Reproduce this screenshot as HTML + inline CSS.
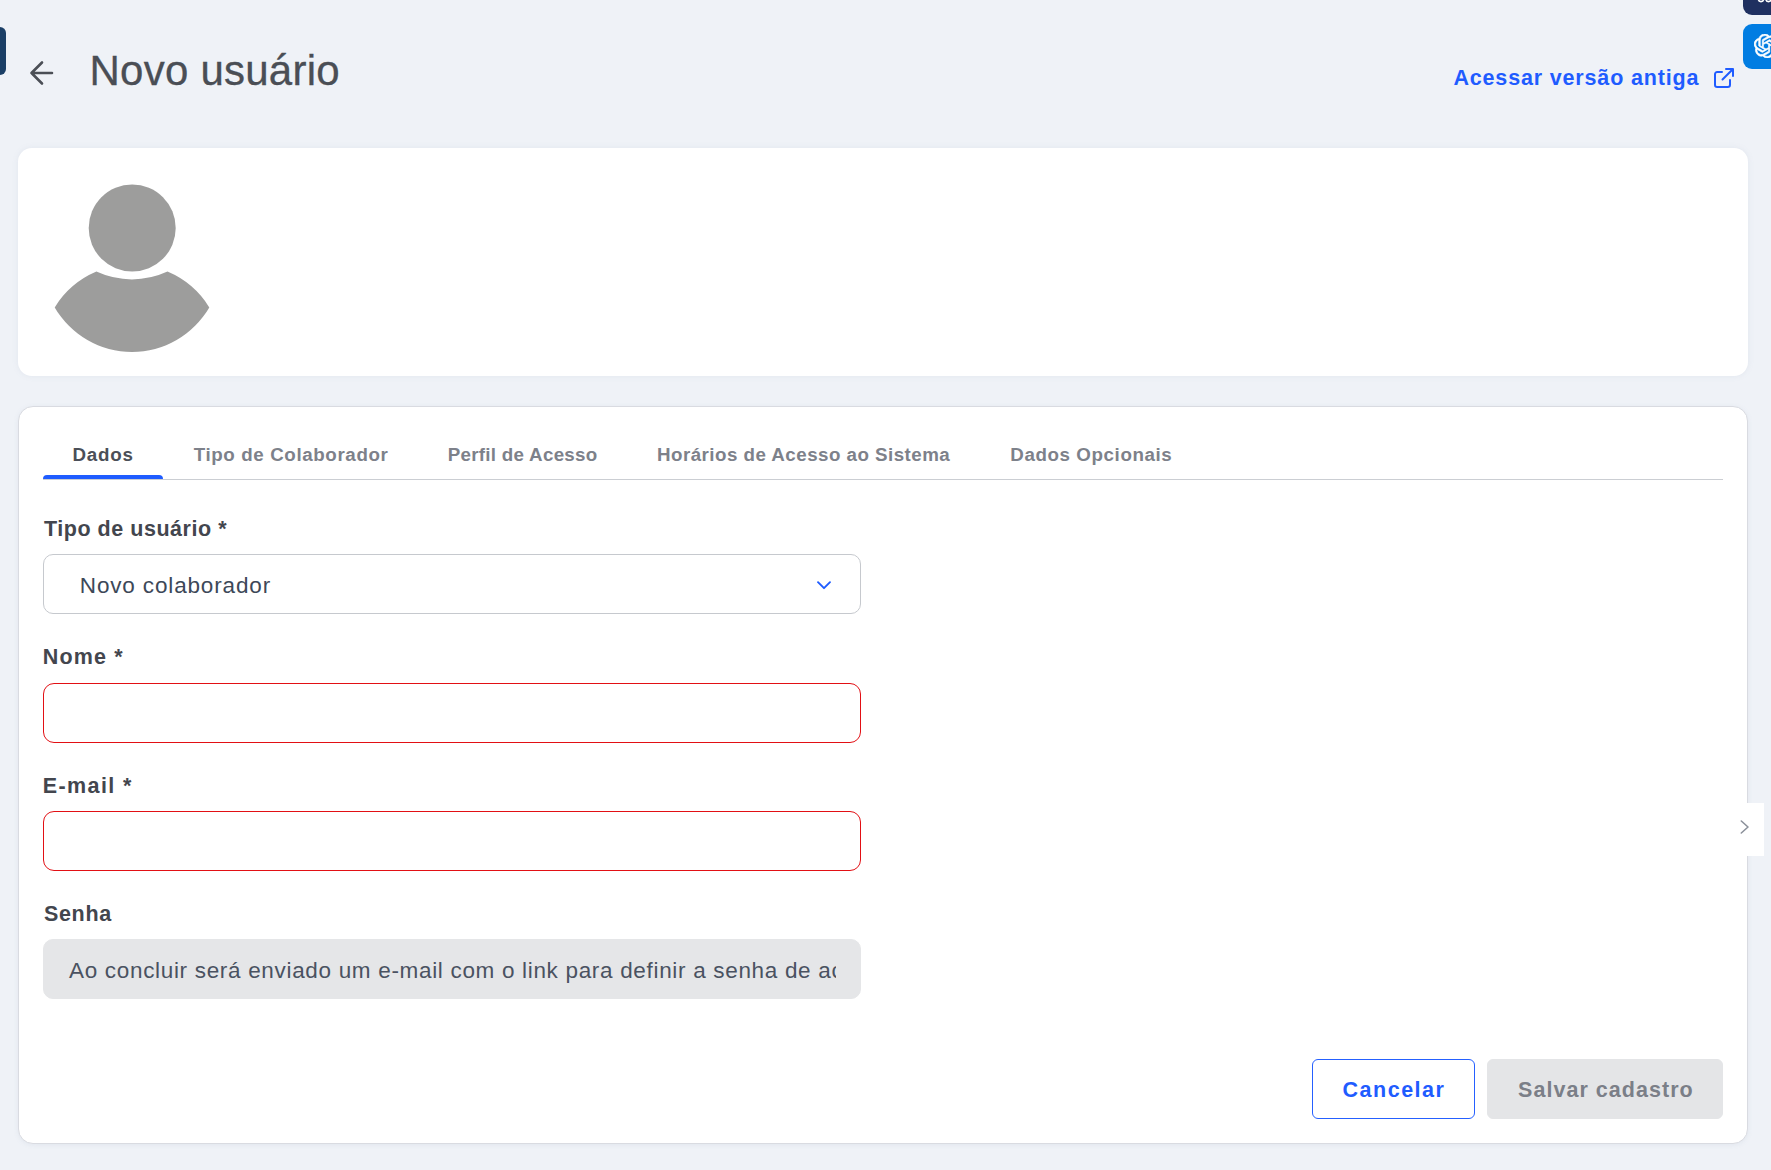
<!DOCTYPE html>
<html lang="pt-BR">
<head>
<meta charset="utf-8">
<title>Novo usuário</title>
<style>
  html, body { margin: 0; padding: 0; }
  body {
    width: 1771px; height: 1170px; overflow: hidden; position: relative;
    background: #eff2f7;
    font-family: "Liberation Sans", sans-serif;
    color: #43474f;
  }
  .abs { position: absolute; }
  .t { position: absolute; white-space: nowrap; line-height: 1; }
  .b { font-weight: 700; }

  .leftbar { left: 0; top: 27px; width: 6px; height: 48px; background: #1b3f66; border-radius: 0 6px 6px 0; }
  .navy { left: 1743px; top: -10px; width: 40px; height: 25px; background: #1f3060; border-radius: 9px; }
  .chat { left: 1743px; top: 24px; width: 40px; height: 45px; background: #017de2; border-radius: 9px; }

  .card1 { left: 18px; top: 148px; width: 1730px; height: 228px; background: #fff; border-radius: 14px;
           box-shadow: 0 0 6px rgba(120,135,170,.10); }
  .card2 { left: 18px; top: 406px; width: 1728px; height: 736px; background: #fff; border-radius: 15px;
           border: 1px solid #d9dbe1; box-shadow: 0 1px 5px rgba(120,135,170,.10); }

  .tabline { left: 43px; top: 479px; width: 1680px; height: 1px; background: #cbced3; }
  .tabactive { left: 43px; top: 475px; width: 120px; height: 4px; background: #1f5cff; border-radius: 4px 4px 0 0; }
  .tab { font-size: 18.75px; font-weight: 700; color: #7d818a; }
  .tab.on { color: #4b4f58; }

  .lbl { font-size: 21.5px; font-weight: 700; color: #43464e; }
  .field { left: 43px; width: 816px; height: 58px; border-radius: 10px; background: #fff; }
  .sel { border: 1px solid #c6c9ce; }
  .err { border: 1px solid #e20f14; border-radius: 11px; }
  .dis { background: #e5e6e8; border: 1px solid #e5e6e8; overflow: hidden; }
  .val { font-size: 22.5px; color: #3d4858; }

  .btn { top: 1059px; height: 58px; border-radius: 6px; font-size: 21.5px; font-weight: 700; }
  .cancel { left: 1312px; width: 161px; border: 1px solid #2560ff; background: #fff; color: #1f5cff; }
  .save { left: 1487px; width: 234px; border: 1px solid #e4e5e7; background: #e4e5e7; color: #7b7f88; }

  .sidetab { left: 1730px; top: 803px; width: 34px; height: 53px; background: #fff; }
</style>
</head>
<body>

<div class="abs leftbar"></div>
<div class="abs navy"></div>
<div class="abs chat"></div>
<svg class="abs" style="left:1754px;top:34px" width="24" height="24" viewBox="0 0 24 24" fill="#fff" stroke="#fff" stroke-width="0.7" stroke-linejoin="round">
  <path d="M22.2819 9.8211a5.9847 5.9847 0 0 0-.5157-4.9108 6.0462 6.0462 0 0 0-6.5098-2.9A6.0651 6.0651 0 0 0 4.9807 4.1818a5.9847 5.9847 0 0 0-3.9977 2.9 6.0462 6.0462 0 0 0 .7427 7.0966 5.98 5.98 0 0 0 .511 4.9107 6.051 6.051 0 0 0 6.5146 2.9001A5.9847 5.9847 0 0 0 13.2599 24a6.0557 6.0557 0 0 0 5.7718-4.2058 5.9894 5.9894 0 0 0 3.9977-2.9001 6.0557 6.0557 0 0 0-.7475-7.0729zm-9.022 12.6081a4.4755 4.4755 0 0 1-2.8764-1.0408l.1419-.0804 4.7783-2.7582a.7948.7948 0 0 0 .3927-.6813v-6.7369l2.02 1.1686a.071.071 0 0 1 .038.052v5.5826a4.504 4.504 0 0 1-4.4945 4.4944zm-9.6607-4.1254a4.4708 4.4708 0 0 1-.5346-3.0137l.142.0852 4.783 2.7582a.7712.7712 0 0 0 .7806 0l5.8428-3.3685v2.3324a.0804.0804 0 0 1-.0332.0615L9.74 19.9502a4.4992 4.4992 0 0 1-6.1408-1.6464zM2.3408 7.8956a4.485 4.485 0 0 1 2.3655-1.9728V11.6a.7664.7664 0 0 0 .3879.6765l5.8144 3.3543-2.0201 1.1685a.0757.0757 0 0 1-.071 0l-4.8303-2.7865A4.504 4.504 0 0 1 2.3408 7.872zm16.5963 3.8558L13.1038 8.364 15.1192 7.2a.0757.0757 0 0 1 .071 0l4.8303 2.7913a4.4944 4.4944 0 0 1-.6765 8.1042v-5.6772a.79.79 0 0 0-.407-.667zm2.0107-3.0231l-.142-.0852-4.7735-2.7818a.7759.7759 0 0 0-.7854 0L9.409 9.2297V6.8974a.0662.0662 0 0 1 .0284-.0615l4.8303-2.7866a4.4992 4.4992 0 0 1 6.6802 4.66zM8.3065 12.863l-2.02-1.1638a.0804.0804 0 0 1-.038-.0567V6.0742a4.4992 4.4992 0 0 1 7.3757-3.4537l-.142.0805L8.704 5.459a.7948.7948 0 0 0-.3927.6813zm1.0976-2.3654l2.602-1.4998 2.6069 1.4998v2.9994l-2.5974 1.4997-2.6067-1.4997Z"/>
</svg>
<svg class="abs" style="left:1756px;top:0" width="15" height="5" viewBox="0 0 15 5" fill="none" stroke="#fff" stroke-width="1.6">
  <circle cx="5" cy="-1" r="2.6"/><circle cx="12.5" cy="-1" r="2.6"/>
</svg>

<!-- header -->
<svg class="abs" style="left:26.5px;top:59px" width="28" height="28" viewBox="0 0 28 28" fill="none" stroke="#4b4f56" stroke-width="2.6" stroke-linecap="round" stroke-linejoin="round">
  <path d="M25 14H4.5M15 3.5L4.5 14L15 24.5"/>
</svg>
<div class="t" id="title" style="-webkit-text-stroke:0.3px #4a4e55;left:89.5px;top:50px;letter-spacing:0.24px;font-size:42px;color:#4a4e55;">Novo usuário</div>

<div class="t b" id="oldlink" style="left:1453.4px;top:68px;letter-spacing:0.84px;font-size:21.5px;color:#1f5cff;">Acessar versão antiga</div>
<svg class="abs" style="left:1713px;top:67px" width="22" height="22" viewBox="0 0 22 22" fill="none" stroke="#1f5cff" stroke-width="2" stroke-linecap="round" stroke-linejoin="round">
  <path d="M9 5H4.2A2.2 2.2 0 0 0 2 7.2V17.8A2.2 2.2 0 0 0 4.2 20H14.8A2.2 2.2 0 0 0 17 17.8V13"/>
  <path d="M13 2H20V9M20 2L9.5 12.5"/>
</svg>

<!-- avatar card -->
<div class="abs card1"></div>
<svg class="abs" style="left:50px;top:180px" width="164" height="176" viewBox="50 180 164 176">
  <circle cx="132.2" cy="228" r="43.5" fill="#9d9d9c"/>
  <path d="M54.7 307.4 A91 91 0 0 1 96.4 271.6 A85 85 0 0 0 167.5 271.6 A91 91 0 0 1 209.3 307.4 A89.3 89.3 0 0 1 54.7 307.4Z" fill="#9d9d9c"/>
</svg>

<!-- form card -->
<div class="abs card2"></div>
<div class="abs sidetab"></div>
<svg class="abs" style="left:1736px;top:817px" width="18" height="20" viewBox="0 0 18 20" fill="none" stroke="#8c919b" stroke-width="1.6" stroke-linecap="round" stroke-linejoin="round">
  <path d="M5.3 4L12 10L5.3 16"/>
</svg>

<div class="abs tabline"></div>
<div class="abs tabactive"></div>
<div class="t tab on" id="tab1" style="left:72.4px;top:446px;letter-spacing:0.82px;">Dados</div>
<div class="t tab" id="tab2" style="left:193.7px;top:446px;letter-spacing:0.62px;">Tipo de Colaborador</div>
<div class="t tab" id="tab3" style="left:447.7px;top:446px;letter-spacing:0.29px;">Perfil de Acesso</div>
<div class="t tab" id="tab4" style="left:657px;top:446px;letter-spacing:0.47px;">Horários de Acesso ao Sistema</div>
<div class="t tab" id="tab5" style="left:1010.3px;top:446px;letter-spacing:0.59px;">Dados Opcionais</div>

<div class="t lbl" id="lbl1" style="left:44px;top:519px;letter-spacing:0.53px;">Tipo de usuário *</div>
<div class="abs field sel" style="top:554px;"></div>
<div class="t val" id="val1" style="left:79.8px;top:575px;letter-spacing:0.85px;">Novo colaborador</div>
<svg class="abs" style="left:814px;top:578px" width="20" height="14" viewBox="0 0 20 14" fill="none" stroke="#1f5cff" stroke-width="1.9" stroke-linecap="round" stroke-linejoin="round">
  <path d="M4 4.2L10 10.2L16 4.2"/>
</svg>

<div class="t lbl" id="lbl2" style="left:42.8px;top:647px;letter-spacing:1.14px;">Nome *</div>
<div class="abs field err" style="top:683px;"></div>

<div class="t lbl" id="lbl3" style="left:42.8px;top:776px;letter-spacing:1.4px;">E-mail *</div>
<div class="abs field err" style="top:811px;"></div>

<div class="t lbl" id="lbl4" style="left:43.9px;top:904px;letter-spacing:0.7px;">Senha</div>
<div class="abs field dis" style="top:939px;">
  <div class="abs" style="left:24px;top:0;width:768px;height:58px;overflow:hidden;">
    <div class="t val" id="val2" style="left:1px;top:20px;letter-spacing:0.68px;color:#4a5261;">Ao concluir será enviado um e-mail com o link para definir a senha de acesso</div>
  </div>
</div>

<div class="abs btn cancel"></div>
<div class="t b" id="btn1" style="left:1342.6px;top:1080px;letter-spacing:1.49px;font-size:21.5px;color:#1f5cff;">Cancelar</div>
<div class="abs btn save"></div>
<div class="t b" id="btn2" style="left:1518.1px;top:1080px;letter-spacing:1.03px;font-size:21.5px;color:#7b7f88;">Salvar cadastro</div>

</body>
</html>
